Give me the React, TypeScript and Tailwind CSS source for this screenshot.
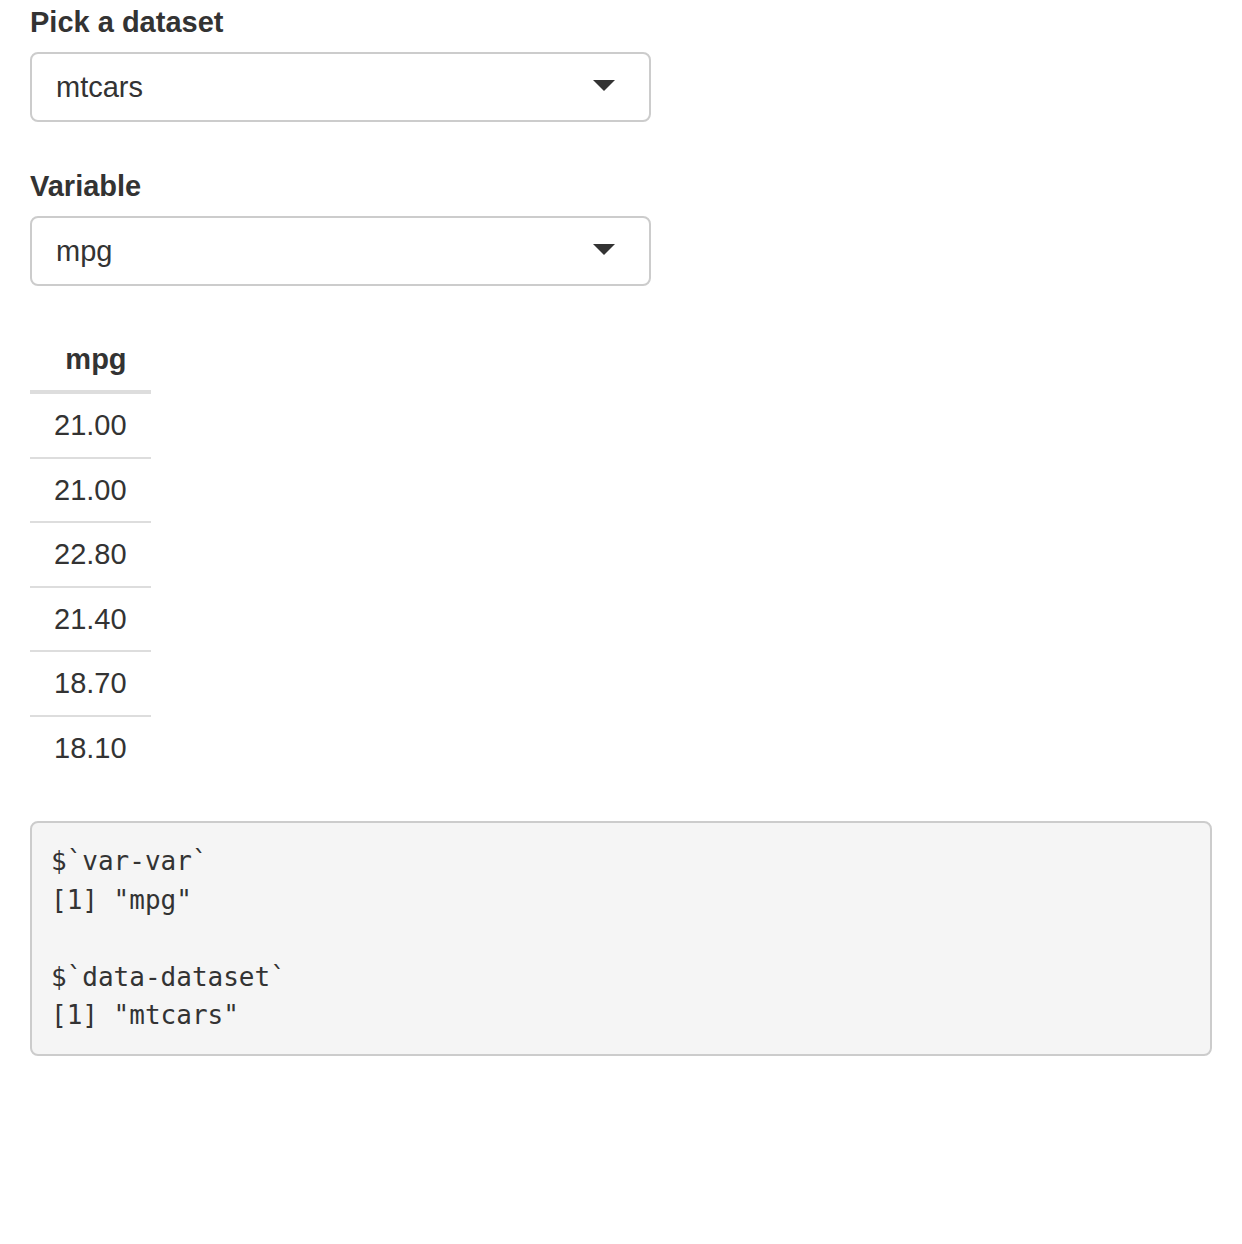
import React from "react";

// 数据集选择 + 变量选择 + 数值表 + 调试输出

const values = ["21.00", "21.00", "22.80", "21.40", "18.70", "18.10"];

function SelectBox({ value }: { value: string }) {
  return (
    <div className="w-[621px] h-[70px] border-2 border-[#ccc] rounded-[8px] bg-white flex items-center justify-between pl-[24px] pr-[34px]">
      <span>{value}</span>
      {/* caret */}
      <span className="w-0 h-0 mb-[3px] border-l-[11px] border-r-[11px] border-t-[11px] border-l-transparent border-r-transparent border-t-[#333]" />
    </div>
  );
}

function Field({ label, value }: { label: string; value: string }) {
  return (
    <div className="mb-[44px]">
      <label className="block font-bold leading-[40px] mb-[10px]">{label}</label>
      <SelectBox value={value} />
    </div>
  );
}

export default function App() {
  return (
    <div className="min-h-screen bg-white text-[#333] text-[29px] leading-[40px] font-['Liberation_Sans',Arial,sans-serif] px-[30px] pt-[2px]">
      <Field label="Pick a dataset" value="mtcars" />
      <Field label="Variable" value="mpg" />

      {/* 数值表 */}
      <div className="w-fit">
        <div className="pt-[9px] pb-[11px] px-[24px] text-right font-bold border-b-4 border-[#ddd]">
          mpg
        </div>
        {values.map((v, i) => (
          <div
            key={i}
            className={`flex items-center justify-end px-[24px] ${
              i > 0 ? "h-[64.5px] border-t-2 border-[#ddd]" : "h-[62.5px]"
            }`}
          >
            {v}
          </div>
        ))}
      </div>

      {/* 输出 */}
      <pre className="mt-[42px] border-2 border-[#ccc] bg-[#f5f5f5] rounded-[8px] p-[19px] text-[26px] leading-[38.6px] text-[#333] font-['DejaVu_Sans_Mono',monospace]">
        {"$`var-var`\n[1] \"mpg\"\n\n$`data-dataset`\n[1] \"mtcars\""}
      </pre>
    </div>
  );
}
